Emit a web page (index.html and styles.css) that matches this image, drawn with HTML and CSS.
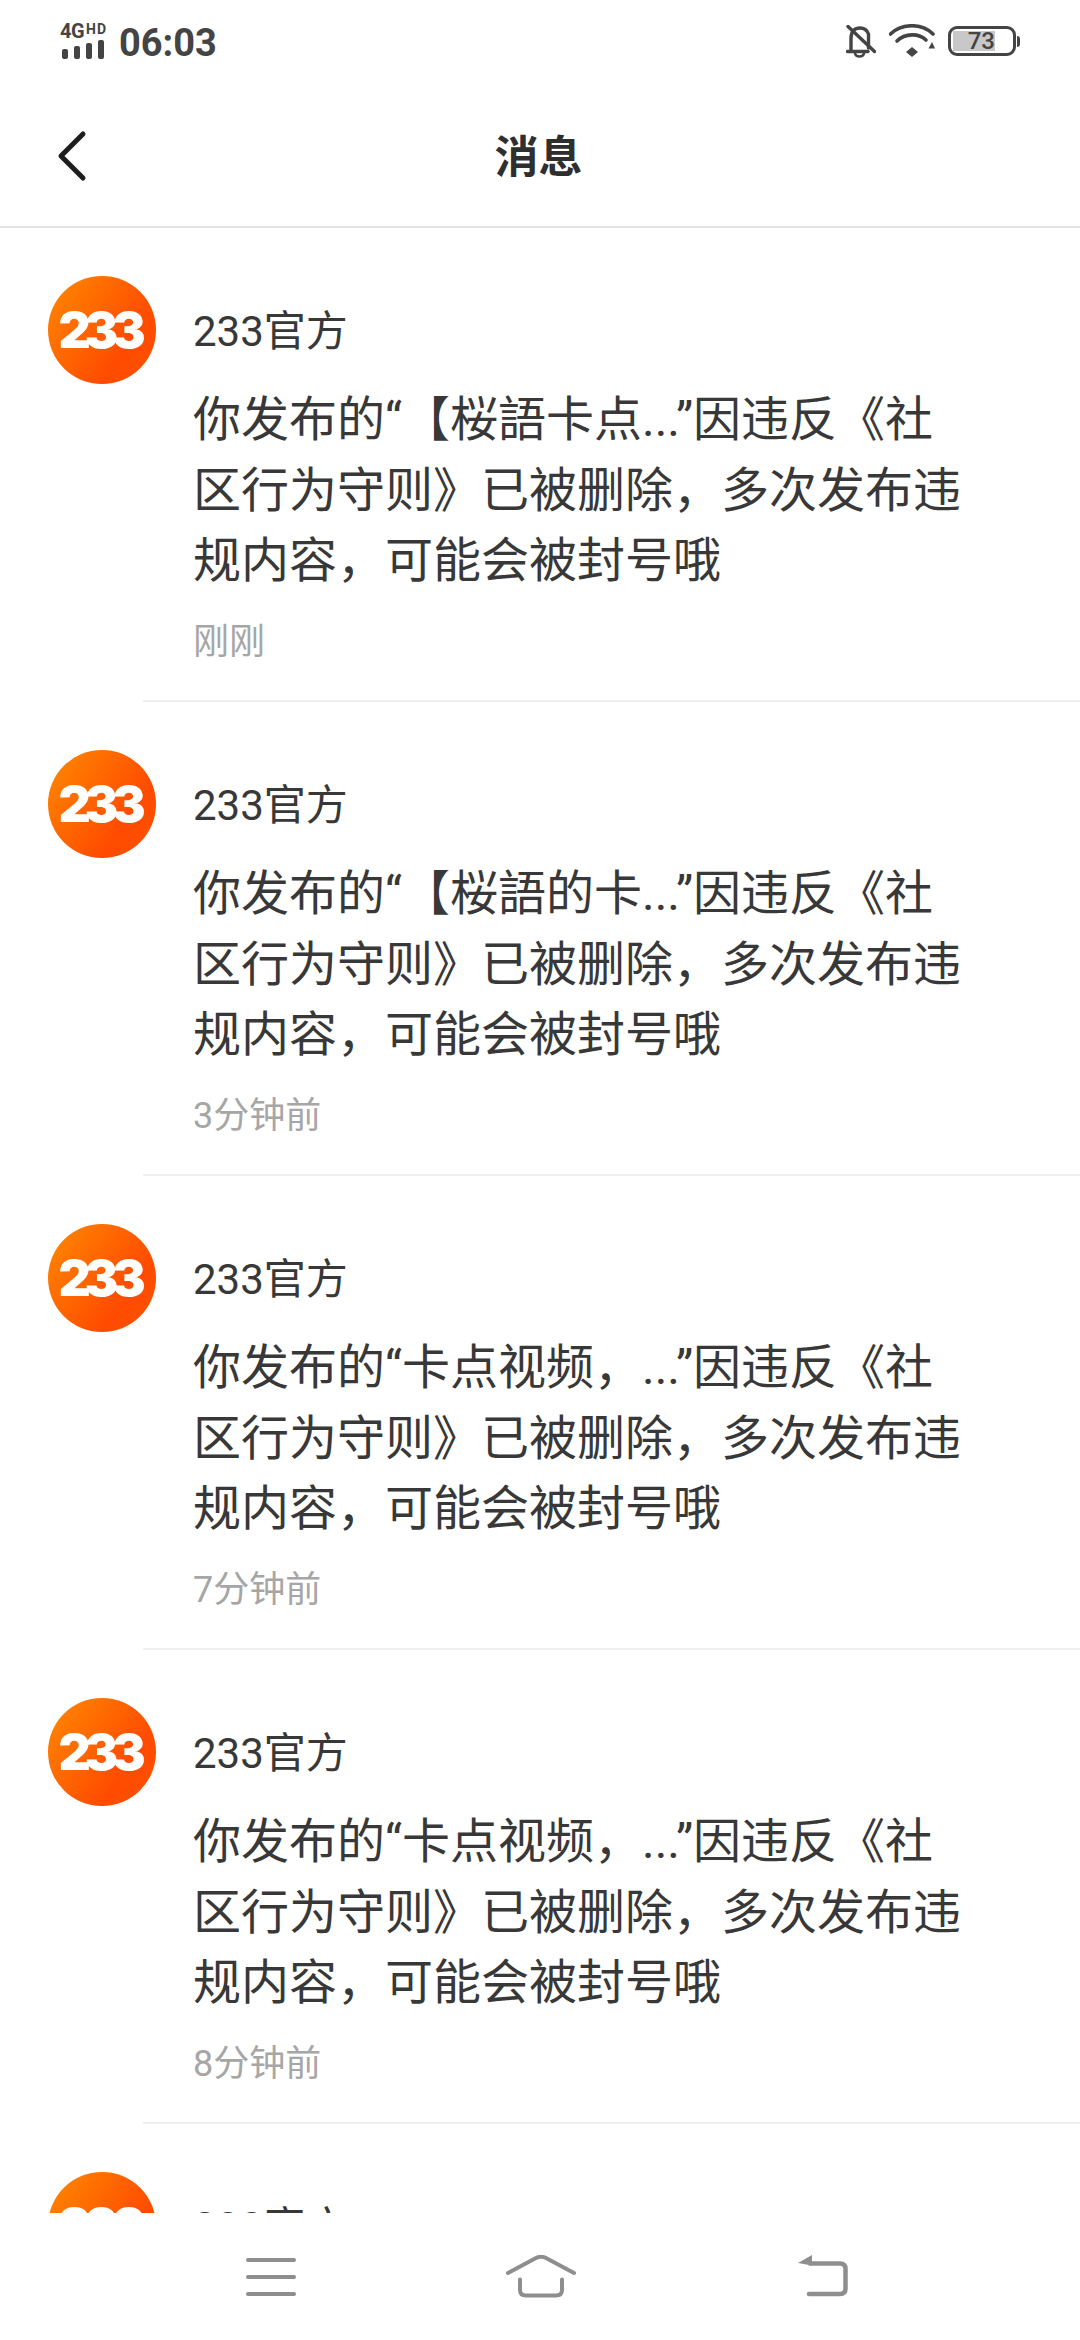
FILE: index.html
```html
<!DOCTYPE html>
<html lang="zh-CN">
  <head>
    <meta charset="UTF-8" />
    <meta name="viewport" content="width=device-width, initial-scale=1.0" />
    <title>消息</title>
    <link rel="stylesheet" href="styles.css">
  </head>
  <body>
    <div class="app">
      <div class="statusbar">
        <div class="status-left">
          <div class="signal">
            <div class="net"><span class="net-4g">4G</span><span class="net-hd">HD</span></div>
            <div class="bars"><i></i><i></i><i></i><i></i></div>
          </div>
          <span class="clock">06:03</span>
        </div>
        <div class="status-right">
          <svg width="30" height="33" viewBox="0 0 30 33" fill="none" stroke="#444" stroke-width="3.400" stroke-linecap="round">
            <path d="M5 26V13C5 6 9 3 14 3C18 3 21 5 22.500 9V23" />
            <path d="M1.500 26.500H22" />
            <path d="M9 28.500C10 32.500 17 32.500 18 28.500" stroke-width="2.500" />
            <path d="M2 1.500L28.500 26.500" />
          </svg>
          <svg width="46" height="34" viewBox="0 0 46 34" fill="none" stroke="#444" stroke-width="3.600" stroke-linecap="round">
            <path d="M1.500 10C13 -1 33 -1 44 10" />
            <path d="M8 17C16 9 30 9 37 16" />
            <path d="M17 28L23 23L29 28L23 33Z" fill="#444" stroke="none" />
            <path d="M39.500 24.500H46L43 18Z" fill="#444" stroke="none" />
          </svg>
          <div class="battery">
            <div class="battery-body">
              <div class="battery-level">73</div>
            </div>
            <div class="battery-cap"></div>
          </div>
        </div>
      </div>

      <div class="header">
        <svg class="back" width="30" height="52" viewBox="0 0 30 52" fill="none" stroke="#1d1d1d" stroke-width="5" stroke-linecap="round" stroke-linejoin="round">
          <path d="M26 4L4 26L26 48" />
        </svg>
        <h1>消息</h1>
      </div>

      <div class="list">
        <div class="msg">
          <div class="avatar"><span>233</span></div>
          <div class="msg-text">
            <div class="msg-name">233官方</div>
            <p class="msg-body">你发布的“【桜語卡点...”因违反《社区行为守则》已被删除，多次发布违规内容，可能会被封号哦</p>
            <div class="msg-time">刚刚</div>
          </div>
        </div>
        <div class="msg">
          <div class="avatar"><span>233</span></div>
          <div class="msg-text">
            <div class="msg-name">233官方</div>
            <p class="msg-body">你发布的“【桜語的卡...”因违反《社区行为守则》已被删除，多次发布违规内容，可能会被封号哦</p>
            <div class="msg-time">3分钟前</div>
          </div>
        </div>
        <div class="msg">
          <div class="avatar"><span>233</span></div>
          <div class="msg-text">
            <div class="msg-name">233官方</div>
            <p class="msg-body">你发布的“卡点视频，...”因违反《社区行为守则》已被删除，多次发布违规内容，可能会被封号哦</p>
            <div class="msg-time">7分钟前</div>
          </div>
        </div>
        <div class="msg">
          <div class="avatar"><span>233</span></div>
          <div class="msg-text">
            <div class="msg-name">233官方</div>
            <p class="msg-body">你发布的“卡点视频，...”因违反《社区行为守则》已被删除，多次发布违规内容，可能会被封号哦</p>
            <div class="msg-time">8分钟前</div>
          </div>
        </div>
        <div class="msg">
          <div class="avatar"><span>233</span></div>
          <div class="msg-text">
            <div class="msg-name">233官方</div>
          </div>
        </div>
      </div>

      <div class="navbar">
        <svg class="nav-menu" width="50" height="38" viewBox="0 0 50 38" fill="none" stroke="#8e8e8e" stroke-width="4" stroke-linecap="round">
          <path d="M2 2H48" />
          <path d="M2 19H48" />
          <path d="M2 36H48" />
        </svg>
        <svg width="70" height="43" viewBox="0 0 70 43" fill="none" stroke="#8e8e8e" stroke-width="4" stroke-linecap="round" stroke-linejoin="round">
          <path d="M2 18L30 3Q35 0.500 40 3L68 18" />
          <path d="M14 24.500V35Q14 40.500 20 40.500H50Q56 40.500 56 35V24.500" />
        </svg>
        <svg class="nav-back" width="50" height="42" viewBox="0 0 50 42" fill="none" stroke="#8e8e8e" stroke-width="4.500" stroke-linecap="round" stroke-linejoin="round">
          <path d="M12 8.500H42Q47.500 8.500 47.500 14V33.500Q47.500 39 42 39H11" />
          <path d="M14 0L0 8L14 10.500Z" fill="#8e8e8e" stroke="none" />
        </svg>
      </div>
    </div>
  </body>
</html>
```

FILE: styles.css
```css
* {
  box-sizing: border-box;
  margin: 0;
  padding: 0;
}

body {
  background-color: #ffffff;
  color: #333333;
  font-family: Roboto, "Noto Sans CJK SC", sans-serif;
  text-spacing-trim: space-all;
}

.app {
  display: flex;
  flex-direction: column;
  height: 100vh;
  overflow: hidden;
}

/* status bar */
.statusbar {
  display: flex;
  justify-content: space-between;
  align-items: center;
  height: 82px;
  padding: 0 60px;
  color: #444444;
  flex-shrink: 0;
}

.status-left {
  display: flex;
  align-items: flex-end;
  gap: 12px;
  padding-top: 1px;
}

.signal {
  display: flex;
  flex-direction: column;
  gap: 1px;
  width: 47px;
}

.net {
  display: flex;
  align-items: flex-start;
  height: 15px;
  line-height: 15px;
  font-weight: 700;
}

.net-4g {
  font-size: 20px;
  letter-spacing: -0.5px;
}

.net-hd {
  font-size: 14px;
  line-height: 10px;
  margin-left: 2px;
  letter-spacing: 1px;
}

.bars {
  display: flex;
  align-items: flex-end;
  gap: 6px;
  padding-left: 2px;
}

.bars i {
  display: block;
  width: 6px;
  border-radius: 2px;
  background-color: #444444;
}

.bars i:nth-child(1) { height: 10px; }
.bars i:nth-child(2) { height: 13px; }
.bars i:nth-child(3) { height: 16px; }
.bars i:nth-child(4) { height: 19px; }

.clock {
  font-size: 38px;
  line-height: 32px;
  font-weight: 700;
}

.status-right {
  display: flex;
  align-items: center;
  gap: 13px;
}

.battery {
  display: flex;
  align-items: center;
  gap: 1px;
}

.battery-body {
  width: 68px;
  height: 30px;
  padding: 2px;
  border: 3px solid #444444;
  border-radius: 9px;
  overflow: hidden;
}

.battery-level {
  width: 42px;
  height: 20px;
  background-color: #c8c8c8;
  font-size: 24px;
  font-weight: 500;
  line-height: 20px;
  text-align: right;
}

.battery-cap {
  width: 3px;
  height: 11px;
  background-color: #444444;
  border-radius: 0 3px 3px 0;
}

/* title row */
.header {
  position: relative;
  display: flex;
  justify-content: center;
  align-items: center;
  height: 146px;
  padding-right: 3px;
  border-bottom: 2px solid #e4e4e4;
  flex-shrink: 0;
}

.back {
  position: absolute;
  left: 57px;
  top: 48px;
}

.header h1 {
  font-size: 44px;
  font-weight: 700;
  color: #2f2f2f;
}

/* messages */
.list {
  flex: 1;
  min-height: 0;
  overflow: hidden;
}

.msg {
  display: flex;
  gap: 37px;
  height: 474px;
  padding: 48px 0 0 48px;
  position: relative;
}

.msg::after {
  content: "";
  position: absolute;
  left: 143px;
  right: 0;
  bottom: 0;
  height: 2px;
  background-color: #efefef;
}

.avatar {
  display: flex;
  justify-content: center;
  align-items: center;
  width: 108px;
  height: 108px;
  border-radius: 50%;
  background: linear-gradient(125deg, #ff8a00 0%, #ff4b00 70%, #ff5200 100%);
  color: #ffffff;
  font-family: Inter, sans-serif;
  font-size: 50px;
  font-weight: 900;
  letter-spacing: -6px;
  flex-shrink: 0;
}

.avatar span {
  margin-left: -6px;
}

.msg-text {
  width: 775px;
  padding-top: 28px;
}

.msg-name {
  font-size: 42px;
  line-height: 56px;
  color: #383838;
}

.msg-body {
  margin-top: 25px;
  font-size: 48px;
  line-height: 70.500px;
  color: #383838;
}

.msg-time {
  margin-top: 22px;
  font-size: 36px;
  line-height: 46px;
  color: #a6a6a6;
}

/* bottom buttons */
.navbar {
  display: flex;
  align-items: flex-start;
  gap: 210px;
  height: 127px;
  padding: 42px 0 0 246px;
  background-color: #ffffff;
  flex-shrink: 0;
}

.nav-menu {
  margin-top: 3px;
}

.nav-back {
  margin-left: 12px;
}
```
